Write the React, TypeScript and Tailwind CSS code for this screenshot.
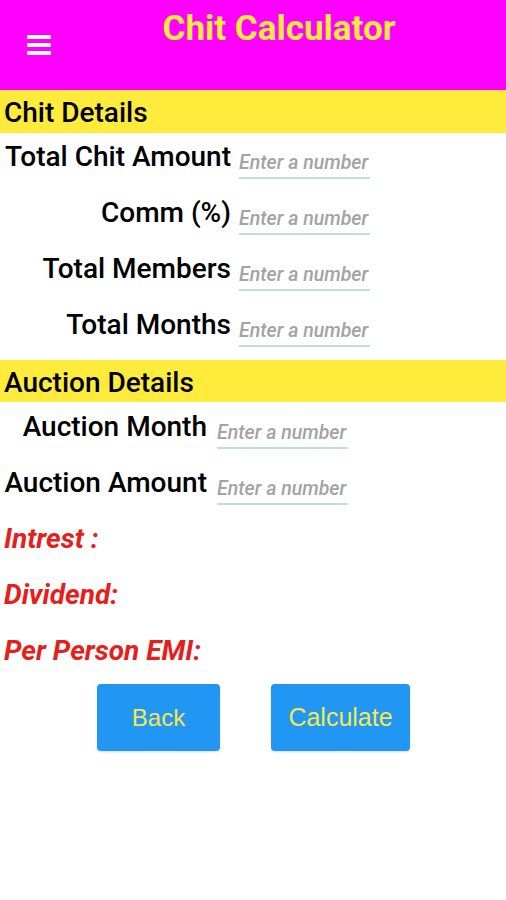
import React from 'react'

const chitFields = ['Total Chit Amount', 'Comm (%)', 'Total Members', 'Total Months']
const auctionFields = ['Auction Month', 'Auction Amount']
const results = ['Intrest :', 'Dividend:', 'Per Person EMI:']

function Field({ label, labelWidth, gap }: { label: string; labelWidth: string; gap: string }) {
  return (
    <div className="flex items-start">
      <div className={`${labelWidth} shrink-0 text-right text-[28px] leading-[32px] font-medium text-black whitespace-nowrap`}>
        {label}
      </div>
      <div className={`${gap} mt-[10px] w-[131px] border-b-2 border-[#b9e0d9] pb-[2px]`}>
        <input
          type="text"
          placeholder="Enter a number"
          className="block w-[134px] bg-transparent text-[19.5px] leading-[24px] italic font-medium text-black placeholder:text-[#a3a3a3] outline-none"
        />
      </div>
    </div>
  )
}

function SectionBar({ title, h }: { title: string; h: string }) {
  return (
    <div className={`${h} flex items-center bg-[#ffeb3b] px-[4px] pt-[3px]`}>
      <span className="text-[28px] font-medium text-black">{title}</span>
    </div>
  )
}

export default function App() {
  return (
    <div className="min-h-[900px] w-[506px] bg-white" style={{ fontFamily: 'Roboto, "Liberation Sans", sans-serif' }}>
      {/* Toolbar */}
      <div className="flex h-[90px] bg-[#ff00ff]">
        <div className="flex w-[76px] shrink-0 items-start border-r border-[#f20af2] pl-[27px] pt-[35px]">
          <div className="flex flex-col gap-[4px]">
            <span className="block h-[4px] w-[24px] rounded-[1px] bg-white" />
            <span className="block h-[4px] w-[24px] rounded-[1px] bg-white" />
            <span className="block h-[4px] w-[24px] rounded-[1px] bg-white" />
          </div>
        </div>
        <div className="flex-1 pr-[24px] pt-[9px] text-center">
          <h1 className="text-[35px] leading-[40px] font-bold text-[#ffeb3b] whitespace-nowrap">Chit Calculator</h1>
        </div>
      </div>

      <SectionBar title="Chit Details" h="h-[43px]" />
      <div className="flex flex-col gap-[18px] pt-[8px] pb-[13px]">
        {chitFields.map(f => (
          <Field key={f} label={f} labelWidth="w-[231px]" gap="ml-[8px]" />
        ))}
      </div>

      <SectionBar title="Auction Details" h="h-[42px]" />
      <div className="flex flex-col gap-[18px] pt-[9px]">
        {auctionFields.map(f => (
          <Field key={f} label={f} labelWidth="w-[207px]" gap="ml-[10px]" />
        ))}
      </div>

      {/* Results */}
      <div className="flex flex-col gap-[24px] pl-[4px] pt-[18px]">
        {results.map(r => (
          <div key={r} className="text-[28px] leading-[32px] font-bold italic text-[#e5201b]">
            {r}
          </div>
        ))}
      </div>

      <div className="mt-[17px] flex">
        <button
          className="ml-[97px] h-[67px] w-[123px] rounded-[4px] bg-[#2196f3] text-[24px] text-[#f4e94c] shadow-sm"
          style={{ fontFamily: '"Liberation Sans", Arial, sans-serif' }}
        >
          Back
        </button>
        <button
          className="ml-[51px] h-[67px] w-[139px] rounded-[4px] bg-[#2196f3] text-[25px] text-[#f4e94c] shadow-sm"
          style={{ fontFamily: '"Liberation Sans", Arial, sans-serif' }}
        >
          Calculate
        </button>
      </div>
    </div>
  )
}
